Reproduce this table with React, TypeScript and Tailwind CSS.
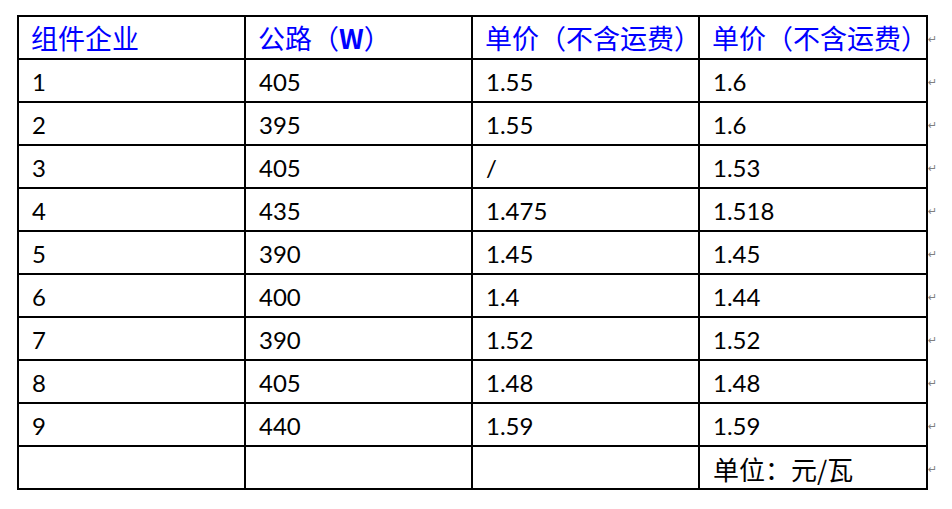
const header = ["组件企业", "公路（W）", "单价（不含运费）", "单价（不含运费）"];

const rows: string[][] = [
  ["1", "405", "1.55", "1.6"],
  ["2", "395", "1.55", "1.6"],
  ["3", "405", "/", "1.53"],
  ["4", "435", "1.475", "1.518"],
  ["5", "390", "1.45", "1.45"],
  ["6", "400", "1.4", "1.44"],
  ["7", "390", "1.52", "1.52"],
  ["8", "405", "1.48", "1.48"],
  ["9", "440", "1.59", "1.59"],
];

const cjk = { fontFamily: '"Noto Sans CJK SC", "Noto Sans", sans-serif' };
const num = { fontFamily: 'Lato, "Noto Sans CJK SC", sans-serif' };

function Cell({ children, cjkText }: { children?: React.ReactNode; cjkText?: boolean }) {
  return (
    <div
      className="h-[43px] border-r-2 border-b-2 border-black flex items-center pl-[13px] pt-[3px] text-[24px] leading-none text-black"
      style={cjkText ? cjk : num}
    >
      {children}
    </div>
  );
}

export default function App() {
  return (
    <div className="w-[952px] h-[509px] bg-white pl-[17px] pt-[15px] flex">
      <div className="grid grid-cols-[227px_227px_227px_228px] border-l-2 border-t-2 border-black self-start">
        {header.map((h, i) => (
          <div
            key={i}
            className="h-[43px] border-r-2 border-b-2 border-black flex items-center pl-[12px] pb-[1px] text-[27px] leading-none font-normal text-[#0000ff]"
            style={cjk}
          >
            {h === "公路（W）" ? (
              <span>
                公路（<span className="font-bold">W</span>）
              </span>
            ) : (
              h
            )}
          </div>
        ))}
        {rows.map((r, ri) =>
          r.map((c, ci) => <Cell key={`${ri}-${ci}`}>{c}</Cell>)
        )}
        <Cell />
        <Cell />
        <Cell />
        <Cell cjkText>
          <span className="text-[26px]">单位：元/瓦</span>
        </Cell>
      </div>
      <div className="flex flex-col pt-[2px]">
        {Array.from({ length: 11 }).map((_, i) => (
          <div key={i} className="h-[43px] flex items-center pt-[2px]">
            <span className="text-[11px] text-[#808080] leading-none" style={{ fontFamily: '"DejaVu Sans", sans-serif' }}>
              ↵
            </span>
          </div>
        ))}
      </div>
    </div>
  );
}
